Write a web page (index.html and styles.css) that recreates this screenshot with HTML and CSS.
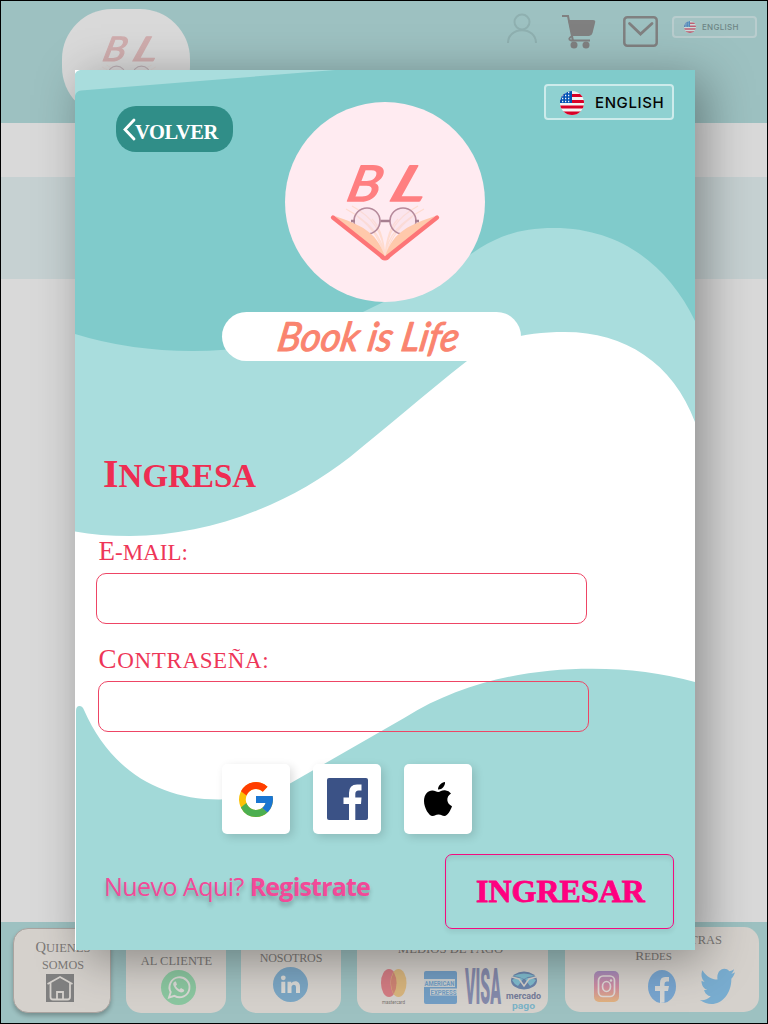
FILE: index.html
```html
<!DOCTYPE html>
<html lang="es">
<head>
<meta charset="utf-8">
<title>Book is Life - Ingresa</title>
<link rel="stylesheet" href="styles.css">
</head>
<body>
<svg class="defs" width="0" height="0">
  <defs>
    <symbol id="flag" viewBox="0 0 24 24">
      <clipPath id="round"><circle cx="12" cy="12" r="12"/></clipPath>
      <g clip-path="url(#round)">
        <rect width="24" height="24" fill="#f3f3f3"/>
        <path d="M0 3h24v3H0zM0 9h24v3H0zM0 14.500h24v3H0zM0 20.500h24v3.500H0z" fill="#d80027"/>
        <rect width="12" height="12" fill="#0052b4"/>
        <path d="M2 4.500h9M2 7.500h9M2 10.500h9M5 1.500h6" stroke="#f3f3f3" stroke-width="1.300" stroke-dasharray="1.300 1.700"/>
      </g>
    </symbol>
    <symbol id="book" viewBox="0 0 110 112">
      <g class="script-letter">
        <text transform="translate(15 42) skewX(-14)" textLength="33" lengthAdjust="spacingAndGlyphs">B</text>
        <text transform="translate(57 42) skewX(-20)" textLength="36" lengthAdjust="spacingAndGlyphs">L</text>
      </g>
      <g fill="none" stroke="#ffdcd0" stroke-width="1.200">
        <path d="M55 98C52 76 38 62 16 50M55 98C53 72 42 58 22 47M55 98C57 76 72 62 94 50M55 98C57 72 68 58 88 47M55 98C50 82 44 70 28 58M55 98C60 82 66 70 82 58M55 98C54 82 50 68 42 60M55 98C56 82 60 68 68 60"/>
      </g>
      <g fill="#f3d9e6" fill-opacity=".35" stroke="#b58a9b" stroke-width="1.600">
        <circle cx="37" cy="62" r="13"/><circle cx="73" cy="62" r="13"/>
      </g>
      <path d="M5 57C30 66 47 72 55 98L48 95ZM105 57C80 66 63 72 55 98L62 95Z" fill="#ffc9ab"/>
      <path d="M50.500 62H60M21 62h4M85 62h4" stroke="#a77f91" stroke-width="2.500"/>
      <path d="M3 58.500L52 97.500M107 58.500L58 97.500" stroke="#fd7577" stroke-width="4.200" stroke-linecap="round"/>
      <path d="M50 96Q55 99 60 96Q60 101 55 101Q50 101 50 96Z" fill="#fd7577" stroke="#fd7577"/>
    </symbol>
  </defs>
</svg>

<div class="page">
  <header class="topbar">
    <div class="brand">
      <svg width="76" height="78" viewBox="0 0 110 112"><use href="#book"/></svg>
    </div>
    <nav class="tools">
      <svg class="user" width="30" height="30" viewBox="0 0 30 30" fill="none" stroke="#8fb0b0" stroke-width="2"><circle cx="15" cy="8" r="7.500"/><path d="M1 29C1 12 29 12 29 29"/></svg>
      <svg class="cart" width="34" height="34" viewBox="0 0 34 34"><path d="M0 1H6L11 26" fill="none" stroke="#808080" stroke-width="2"/><path d="M6 5H31Q34 5 33 8L30.500 18Q30 20.500 27 21H10Z" fill="#808080"/><path d="M10 21Q5 24 9 25.500H28" fill="none" stroke="#808080" stroke-width="1.800"/><circle cx="12" cy="30" r="3.500" fill="#808080"/><circle cx="24" cy="30" r="3.500" fill="#808080"/></svg>
      <svg class="mail" width="35" height="31" viewBox="0 0 35 31" fill="none" stroke="#808080"><rect x="1.300" y="1.300" width="32.400" height="28.400" rx="3" stroke-width="2.500"/><path d="M6.500 7.500L17.500 18L29 7.500" stroke-width="2.800" stroke-linecap="round"/></svg>
      <div class="lang lang-small"><svg width="12" height="12"><use href="#flag"/></svg><span>ENGLISH</span></div>
    </nav>
  </header>
  <main class="backdrop"><div class="band"></div></main>
  <footer class="footer">
    <section class="card card-about">
      <h3>Quienes</h3><h3>somos</h3>
      <svg width="28" height="28" viewBox="0 0 28 28"><rect width="28" height="28" fill="#808080"/><path d="M1.500 10L14 3L26.500 10M4.500 9V23Q4.500 25.500 7 25.500H21.500Q24 25.500 24 23V9M11 25V18H17V25" fill="none" stroke="#d5d1cc" stroke-width="1.800"/></svg>
    </section>
    <section class="card card-help">
      <h3>al cliente</h3>
      <svg width="35" height="35" viewBox="0 0 35 35"><circle cx="17.500" cy="17.500" r="17.500" fill="#8bc7a0"/><path d="M8 27.500L9.700 22A10 10 0 1 1 13.500 25.900Z" fill="none" stroke="#d9d9d5" stroke-width="1.900"/><path d="M14 11.500Q11.500 12.500 12.500 15.500Q15 21 20 22.500Q23 22.500 23.300 20L20 18L18.500 19.500Q16 18.500 14.800 16L16 14.500L14.900 11.500Z" fill="#d9d9d5"/></svg>
    </section>
    <section class="card card-contact">
      <h3>nosotros</h3>
      <svg width="35" height="35" viewBox="0 0 35 35"><circle cx="17.500" cy="17.500" r="17.500" fill="#7ba6c4"/><g fill="#d9d9d6"><circle cx="10.300" cy="10.800" r="2.400"/><path d="M8.300 14.700h4V26h-4zM14.500 14.700h3.800v1.600C20.500 13 27 13.600 27 19.600V26h-4v-5.800c0-3.600-4.500-3.200-4.500 0V26h-4z"/></g></svg>
    </section>
    <section class="card card-pay">
      <h3>medios de pago</h3>
      <div class="pay-row">
        <svg class="master" width="28" height="36" viewBox="0 0 28 36"><ellipse cx="9" cy="14" rx="8" ry="14" fill="#d37c83"/><ellipse cx="18.500" cy="14" rx="8" ry="14" fill="#d8b57d"/><path d="M13.700 3Q19.500 14 13.700 25Q8 14 13.700 3" fill="#cf8474"/><text x="2" y="34.500" font-size="5.500" textLength="23" lengthAdjust="spacingAndGlyphs" fill="#77736f">mastercard</text></svg>
        <svg class="amex" width="33" height="33" viewBox="0 0 33 33"><rect width="33" height="33" rx="2" fill="#739ec4"/><path d="M0 8h31v8H0zM6 17.500h27v7H6z" fill="#c9ced0"/><g fill="#739ec4" font-weight="700" font-size="8"><text x=".500" y="14.800" textLength="30" lengthAdjust="spacingAndGlyphs">AMERICAN</text><text x="6.500" y="24" textLength="26" lengthAdjust="spacingAndGlyphs">EXPRESS</text></g></svg>
        <svg class="visa" width="36" height="36" viewBox="0 0 36 36"><text transform="translate(0 35) scale(1 2.350)" font-size="21" font-weight="900" textLength="36" lengthAdjust="spacingAndGlyphs" fill="#858aab">VISA</text></svg>
        <svg class="mercado" width="36" height="40" viewBox="0 0 36 40"><ellipse cx="18" cy="9.500" rx="13" ry="9" fill="#6c86ac"/><path d="M6 9Q12 5 17 8L12 15Q8 13 6 9ZM30 9Q24 5 19 8L24 15Q28 13 30 9Z" fill="#80bdcf"/><path d="M7 5Q18 0 29 5L22 6L18 8L13 6Z" fill="#80bdcf"/><path d="M6 6L13 8L18 15L23 8L30 6" fill="none" stroke="#d5d1cc" stroke-width="1.500"/><text y="28" textLength="35" font-size="9" font-weight="700" lengthAdjust="spacingAndGlyphs" fill="#747c99">mercado</text><text x="6" y="37.500" textLength="23" font-size="8.500" font-weight="700" lengthAdjust="spacingAndGlyphs" fill="#7bb3c7">pago</text></svg>
      </div>
    </section>
    <section class="card card-social">
      <h3 class="ours">Nuestras</h3><h3 class="nets">Redes</h3>
      <div class="social-row">
        <svg width="25" height="31" viewBox="0 0 25 31"><linearGradient id="ig" x1="0" y1="0" x2="0" y2="1"><stop offset="0" stop-color="#a58bbb"/><stop offset=".5" stop-color="#cf8ba0"/><stop offset="1" stop-color="#e0b27f"/></linearGradient><rect width="25" height="31" rx="5" fill="url(#ig)"/><g fill="none" stroke="#ded8d6" stroke-width="1.700"><rect x="4.500" y="5" width="16" height="20.500" rx="4.500"/><ellipse cx="12.500" cy="15.500" rx="4" ry="5"/></g><circle cx="17" cy="9.500" r="1.200" fill="#ded8d6"/></svg>
        <svg width="28" height="33" viewBox="0 0 28 33"><ellipse cx="14" cy="16.500" rx="14" ry="16.500" fill="#78a5cf"/><path d="M12 33V21H7V16H12V13Q12 7 17 7H21V11.500H18.500Q16.500 11.500 16.500 14V16H21L20 21H16.500V32.500Z" fill="#d6d6d4"/></svg>
        <svg width="35" height="35" viewBox="0 1.500 24 21.500" preserveAspectRatio="none"><path d="M24 3.500c-.8.500-1.700.8-2.500.9 1-.7 1.500-1.600 1.900-2.700-1 .6-2 1-3.100 1.200C16.800-.5 11 2 12 8 8 8 4.200 6 1.700 2.200.4 4.700 1 7.700 3.200 9.400c-.8 0-1.500-.3-2.200-.7 0 2.800 1.700 5 4 5.600-.7.200-1.500.2-2.200.1.600 2.200 2.500 3.700 4.600 3.800C5.300 20.200 2.700 20.900 0 20.600 10 27 21.500 20 21.500 7.500c1-.9 1.900-2.200 2.500-4z" fill="#79add0"/></svg>
      </div>
    </section>
  </footer>

  <div class="modal">
    <svg class="waves" width="620" height="880" viewBox="0 0 620 880">
      <path d="M5 0H620V352C598 293 550 262 490 262C445 262 418 271 392 291C350 324 312 357 275 387C215 434 135 466 55 466Q25 466 0 461.500V4Q1 1 5 0Z" fill="#a9dddd"/>
      <path d="M260 0H620V251C593 195 545 158 479 158C445 158 425 166 405 178C370 202 340 217 288 242C245 264 180 281 118 281Q55 281 0 264V26Q1 21 6 20.500Z" fill="#80cbcb"/>
      <path d="M1 880V641Q1 636 4.500 636Q7.500 636 9 640C35 700 85 730 145 729.500C175 728 197 724 215 713.500L330 647.500C385 613 450 598.700 517 598.700Q572 598.700 620 612V880Z" fill="#a2d9d8"/>
    </svg>
    <div class="modal-top">
      <button class="back"><svg width="13" height="24" viewBox="0 0 13 24"><path d="M11 2L2 11.500L11 21" fill="none" stroke="#fff" stroke-width="2.800" stroke-linecap="round"/></svg><span>VOLVER</span></button>
      <div class="logo"><svg width="110" height="112"><use href="#book"/></svg></div>
      <div class="lang lang-big"><svg width="24" height="24"><use href="#flag"/></svg><span>ENGLISH</span></div>
    </div>
    <div class="wordmark"><svg width="190" height="49" viewBox="0 0 190 49"><text transform="translate(3 38.500) skewX(-10)" class="wordmark-text" textLength="181" lengthAdjust="spacingAndGlyphs">Book is Life</text></svg></div>
    <h1 class="title">Ingresa</h1>
    <form class="form">
      <label class="label" for="mail">E-mail:</label>
      <input class="field" id="mail" type="email">
      <label class="label label-pass" for="pass">Contraseña:</label>
      <input class="field field-pass" id="pass" type="password">
    </form>
    <div class="providers">
      <div class="provider"><svg width="34" height="35" viewBox="4 4 40 40" preserveAspectRatio="none"><path fill="#fbc107" d="M43.600 20H24v8h11.300A12 12 0 1 1 32 15l5.600-5.600A20 20 0 1 0 43.600 20z"/><path fill="#ff3d00" d="M6.300 14.700l6.600 4.800A12 12 0 0 1 32 15l5.600-5.600A20 20 0 0 0 6.300 14.700z"/><path fill="#4caf50" d="M24 44c5.200 0 9.900-2 13.400-5.200l-6.200-5.200A12 12 0 0 1 12.700 28l-6.500 5A20 20 0 0 0 24 44z"/><path fill="#1976d2" d="M43.600 20H24v8h11.300a12 12 0 0 1-4.100 5.600l6.200 5.200C37 39.200 44 34 44 24c0-1.300-.1-2.700-.4-4z"/></svg></div>
      <div class="provider"><svg width="41" height="42" viewBox="0 0 41 42"><rect width="41" height="42" rx="2" fill="#3b5286"/><path d="M22 42V26H16.500V19.500H22V15Q22 6.500 30 6.500H34.500V12.500H31.500Q28.300 12.500 28.300 16V19.500H34.500L34 26H28.300V42Z" fill="#fff"/></svg></div>
      <div class="provider"><svg width="28" height="34" viewBox="0 0 28 34"><path d="M14 7.500C14 3.500 17.500 .5 21 0C21.500 4 17.500 8 14 7.500ZM14.200 10C16 10 18 8 21 8.300Q25 8.600 27 11.600C21.500 15 22.500 22 28 24.200C26.500 28.500 23.500 34 20.500 34C18 34 17.500 32.500 14.500 32.500C11.500 32.500 11 34 8.500 34C5 34 0 26 0 19C0 12.500 4 8.500 8.300 8.500C11 8.500 12.500 10 14.200 10Z"/></svg></div>
    </div>
    <div class="actions">
      <p class="signup"><span>Nuevo Aqui?</span> <b>Registrate</b></p>
      <button class="submit">INGRESAR</button>
    </div>
  </div>
</div>
</body>
</html>
```
FILE: styles.css
```css
* { box-sizing: border-box; }
body { margin: 0; font-family: "Liberation Serif", serif; }
h1, h3, p { margin: 0; font-weight: 400; }
button { border: 0; padding: 0; font-family: inherit; }
svg { display: block; flex: none; overflow: visible; }
svg text { font-family: "Roboto", sans-serif; }
.defs { position: absolute; }

.page {
  position: relative;
  display: flex;
  flex-direction: column;
  width: 768px;
  height: 1024px;
  overflow: hidden;
  border: 1px solid #000;
  background: #d9d9d9;
}

/* Dimmed page behind the dialog */
.topbar { display: flex; justify-content: space-between; height: 122px; padding: 8px 10px 0 61px; background: #9dc1c1; }
.brand { display: flex; justify-content: center; width: 128px; height: 108px; padding: 23px 0 0 5px; border-radius: 50px; background: #d9d9d9; }
.brand svg { opacity: .45; filter: grayscale(.35) brightness(.9); }
.tools { display: flex; align-items: flex-start; padding-top: 5px; }
.user { margin-right: -1px; }
.cart { margin: 1px 0 0 26px; }
.mail { margin: 2px 0 0 27px; }
.lang { display: flex; align-items: center; font-family: Inter, sans-serif; font-weight: 500; }
.lang-small { gap: 6px; width: 85px; height: 22px; margin: 2px 0 0 14px; padding-left: 10px; border: 2px solid #b9cdce; border-radius: 4px; background: #a3c3c3; color: #6d8585; font-size: 8px; letter-spacing: .3px; }
.lang-small svg { opacity: .5; }
.backdrop { flex: 1; padding-top: 54px; }
.band { height: 102px; background: #c6d1d2; }

.footer { display: flex; height: 101px; padding: 5px 8px 0 12px; background: #9dc1c1; }
.card { display: flex; flex-direction: column; align-items: center; height: 86px; border-radius: 15px; background: #d5d1cc; color: #7c7977; }
.card h3 { font-size: 12.500px; line-height: 18px; text-transform: uppercase; white-space: nowrap; }
.card-about { width: 98px; height: 85px; margin: 1px 15px 0 0; padding: 9px 0 0 2px; border: 1px solid #aaa39f; box-shadow: 0 3px 4px rgba(0,0,0,.25); }
.card-about h3:first-child:first-letter { font-size: 14.500px; }
.card-about h3 + h3 { font-size: 12.200px; line-height: 17px; }
.card-about svg { margin: 1px 7px 0 0; }
.card-about svg { margin-top: 0; }
.card-help { width: 100px; margin-right: 15px; padding: 26px 0 0 5px; }
.card-help h3 { line-height: 17px; margin-right: 4px; }
.card-contact { width: 100px; margin-right: 16px; padding-top: 23px; }
.card-contact h3 { font-size: 12px; line-height: 17px; letter-spacing: -.1px; }
.card-contact svg { margin-right: 2px; }
.card-pay { width: 191px; margin-right: 17px; padding: 13px 0 0; }
.card-pay h3 { margin-right: 4px; font-size: 12.700px; }
.pay-row { display: flex; width: 191px; margin-top: 11px; padding-left: 23px; }
.amex { margin: 2px 0 0 16px; }
.visa { margin-left: 8px; }
.mercado { margin: 2px 0 0 5px; }
.card-social { width: 194px; height: 85px; padding-top: 4px; }
.ours { align-self: flex-end; margin-right: 37px; }
.nets { margin: -2px 17px 0 0; }
.nets:first-letter { font-size: 13.500px; }
.card .nets { font-size: 11px; }
.social-row { display: flex; align-items: center; margin-top: 4px; padding-left: 5px; gap: 29px; }
.social-row svg:last-child { margin-left: -5px; }

/* Sign-in dialog */
.modal {
  position: absolute;
  isolation: isolate;
  left: 74px;
  top: 69px;
  width: 620px;
  height: 880px;
  background: #fff;
  box-shadow: 10px 9px 45px rgba(0,0,0,.36);
}
.waves { position: absolute; inset: 0; z-index: -1; }
.modal-top { display: flex; align-items: flex-start; height: 242px; padding: 14px 21px 0 41px; }
.back { display: flex; width: 117px; height: 46px; margin-top: 22px; padding: 12px 0 0 7px; border-radius: 20px; background: #308e88; color: #fff; }
.back span { margin-left: -1px; font-size: 20.500px; line-height: 29px; font-weight: 700; letter-spacing: -.4px; }
.logo { width: 200px; height: 200px; margin: 18px 0 0 52px; padding: 57px 0 0 45px; border-radius: 50%; background: #ffebf1; }
.script-letter text { font: italic 400 49px Lato, sans-serif; fill: #ff7f81; stroke: #ff7f81; stroke-width: 1.600px; stroke-linejoin: round; }
.lang-big { gap: 11px; width: 130px; height: 36px; margin-left: 59px; padding: 2px 0 0 14px; border: 2px solid #cdebeb; border-radius: 4px; background: #8fd1d1; color: #050505; font-size: 15px; letter-spacing: .6px; }
.lang-big span { margin-top: -2px; }
.wordmark { width: 299px; height: 49px; margin-left: 147px; padding-left: 51px; border-radius: 24.500px; background: #fff; }
.wordmark-text { font: italic 400 40px Lato, sans-serif; fill: #fa846f; stroke: #fa846f; stroke-width: 1.100px; stroke-linejoin: round; }
.title { height: 48px; margin: 89px 0 0 28px; font-size: 33px; line-height: 48px; font-weight: 700; text-transform: uppercase; color: #ee2d52; }
.title:first-letter { font-size: 40px; }
.form { display: flex; flex-direction: column; align-items: flex-start; margin-top: 38px; padding-left: 20.500px; }
.label { display: block; height: 30px; margin-left: 3px; font-size: 23px; line-height: 30px; text-transform: uppercase; color: #ee3658; }
.label:first-letter { font-size: 27px; }
.label-pass { margin-top: 20px; letter-spacing: .65px; }
.field { width: 491px; height: 51px; margin-top: 7px; padding: 0 14px; border: 1px solid #ee4565; border-radius: 10px; background: transparent; font-size: 20px; }
.field-pass { margin-left: 2px; }
.providers { display: flex; gap: 23.500px; margin: 32px 0 0 147px; }
.provider { display: flex; align-items: center; justify-content: center; width: 67.700px; height: 70px; border-radius: 5px; background: #fff; box-shadow: 3px 3px 10px rgba(0,0,0,.14); }
.actions { display: flex; justify-content: space-between; margin-top: 20px; padding: 0 21px 0 29px; }
.signup { margin-top: 15px; font: 400 25px/34px "Open Sans", sans-serif; letter-spacing: -.55px; color: #f24a98; text-shadow: 0 4px 4px rgba(0,0,0,.25); white-space: nowrap; }
.signup b { font-weight: 700; letter-spacing: -.8px; }
.submit { width: 229px; height: 75px; border: 1px solid #f30b80; border-radius: 7px; background: transparent; color: #ff0080; font-size: 32px; font-weight: 700; padding-left: 2px; -webkit-text-stroke: .8px #ff0080; box-shadow: 0 4px 4px rgba(0,0,0,.06), inset 0 4px 4px rgba(0,0,0,.06); }
```
